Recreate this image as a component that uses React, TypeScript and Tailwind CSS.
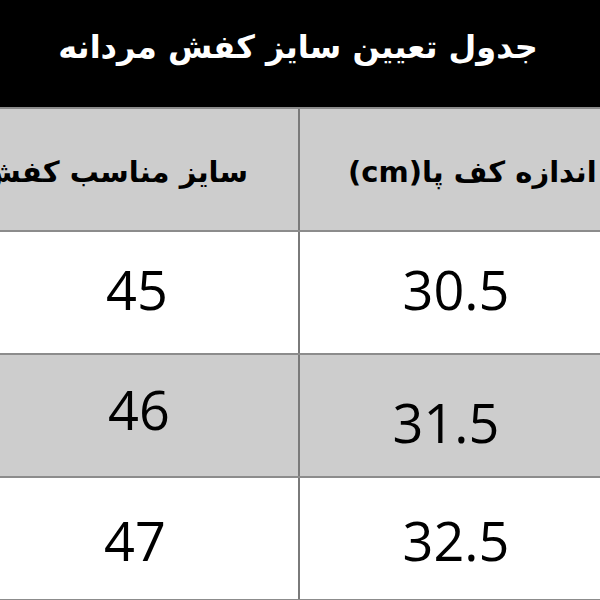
const persian = "font-['DejaVu_Sans',sans-serif]";
const num = "font-['Open_Sans',sans-serif]";

// each row: [size, foot length, extra classes for the two cells]
const rows = [
  { size: "45", foot: "30.5", bg: "bg-white", sizeCls: "pl-[0px] pb-[8px]", footCls: "pr-[4px] pb-[8px]" },
  { size: "46", foot: "31.5", bg: "bg-[#cdcdcd]", sizeCls: "pl-[4px] pb-[14px]", footCls: "pr-[24px] pt-[12px]" },
  { size: "47", foot: "32.5", bg: "bg-white", sizeCls: "pr-[4px] pt-[2px]", footCls: "pr-[4px] pt-[2px]" },
];

export default function App() {
  return (
    <div className="w-[600px] h-[600px] overflow-hidden bg-white">
      {/* Title bar */}
      <div className="h-[107px] bg-black flex items-center justify-center pb-[14px]">
        <h1 dir="rtl" className={`${persian} text-white font-bold text-[32px] leading-none pr-[4px]`}>
          جدول تعیین سایز کفش مردانه
        </h1>
      </div>

      <div className="-ml-[24px] w-[640px]">
        {/* Header row */}
        <div className="grid grid-cols-[324px_316px] h-[123px] bg-[#cdcdcd] border-t-2 border-[#8c8c8c]">
          <div className="flex items-center justify-end pr-[50px] pt-[6px] border-r-2 border-[#7a7a7a] overflow-hidden">
            <span dir="rtl" className={`${persian} font-bold text-[29px] whitespace-nowrap text-black`}>
              سایز مناسب کفش
            </span>
          </div>
          <div className="flex items-center justify-start pl-[48px] pt-[6px] overflow-hidden">
            <span dir="rtl" className={`${persian} font-bold text-[29px] whitespace-nowrap text-black`}>
              اندازه کف پا(cm)
            </span>
          </div>
        </div>

        {rows.map((r) => (
          <div
            key={r.size}
            className={`grid grid-cols-[324px_316px] h-[123px] border-t-2 border-[#8c8c8c] ${r.bg}`}
          >
            <div className={`flex items-center justify-center border-r-2 border-[#7a7a7a] ${r.sizeCls}`}>
              <span className={`${num} text-[54px] leading-none text-black`}>{r.size}</span>
            </div>
            <div className={`flex items-center justify-center ${r.footCls}`}>
              <span className={`${num} text-[54px] leading-none text-black`}>{r.foot}</span>
            </div>
          </div>
        ))}
        <div className="border-t-2 border-[#8c8c8c] h-[20px]" />
      </div>
    </div>
  );
}
